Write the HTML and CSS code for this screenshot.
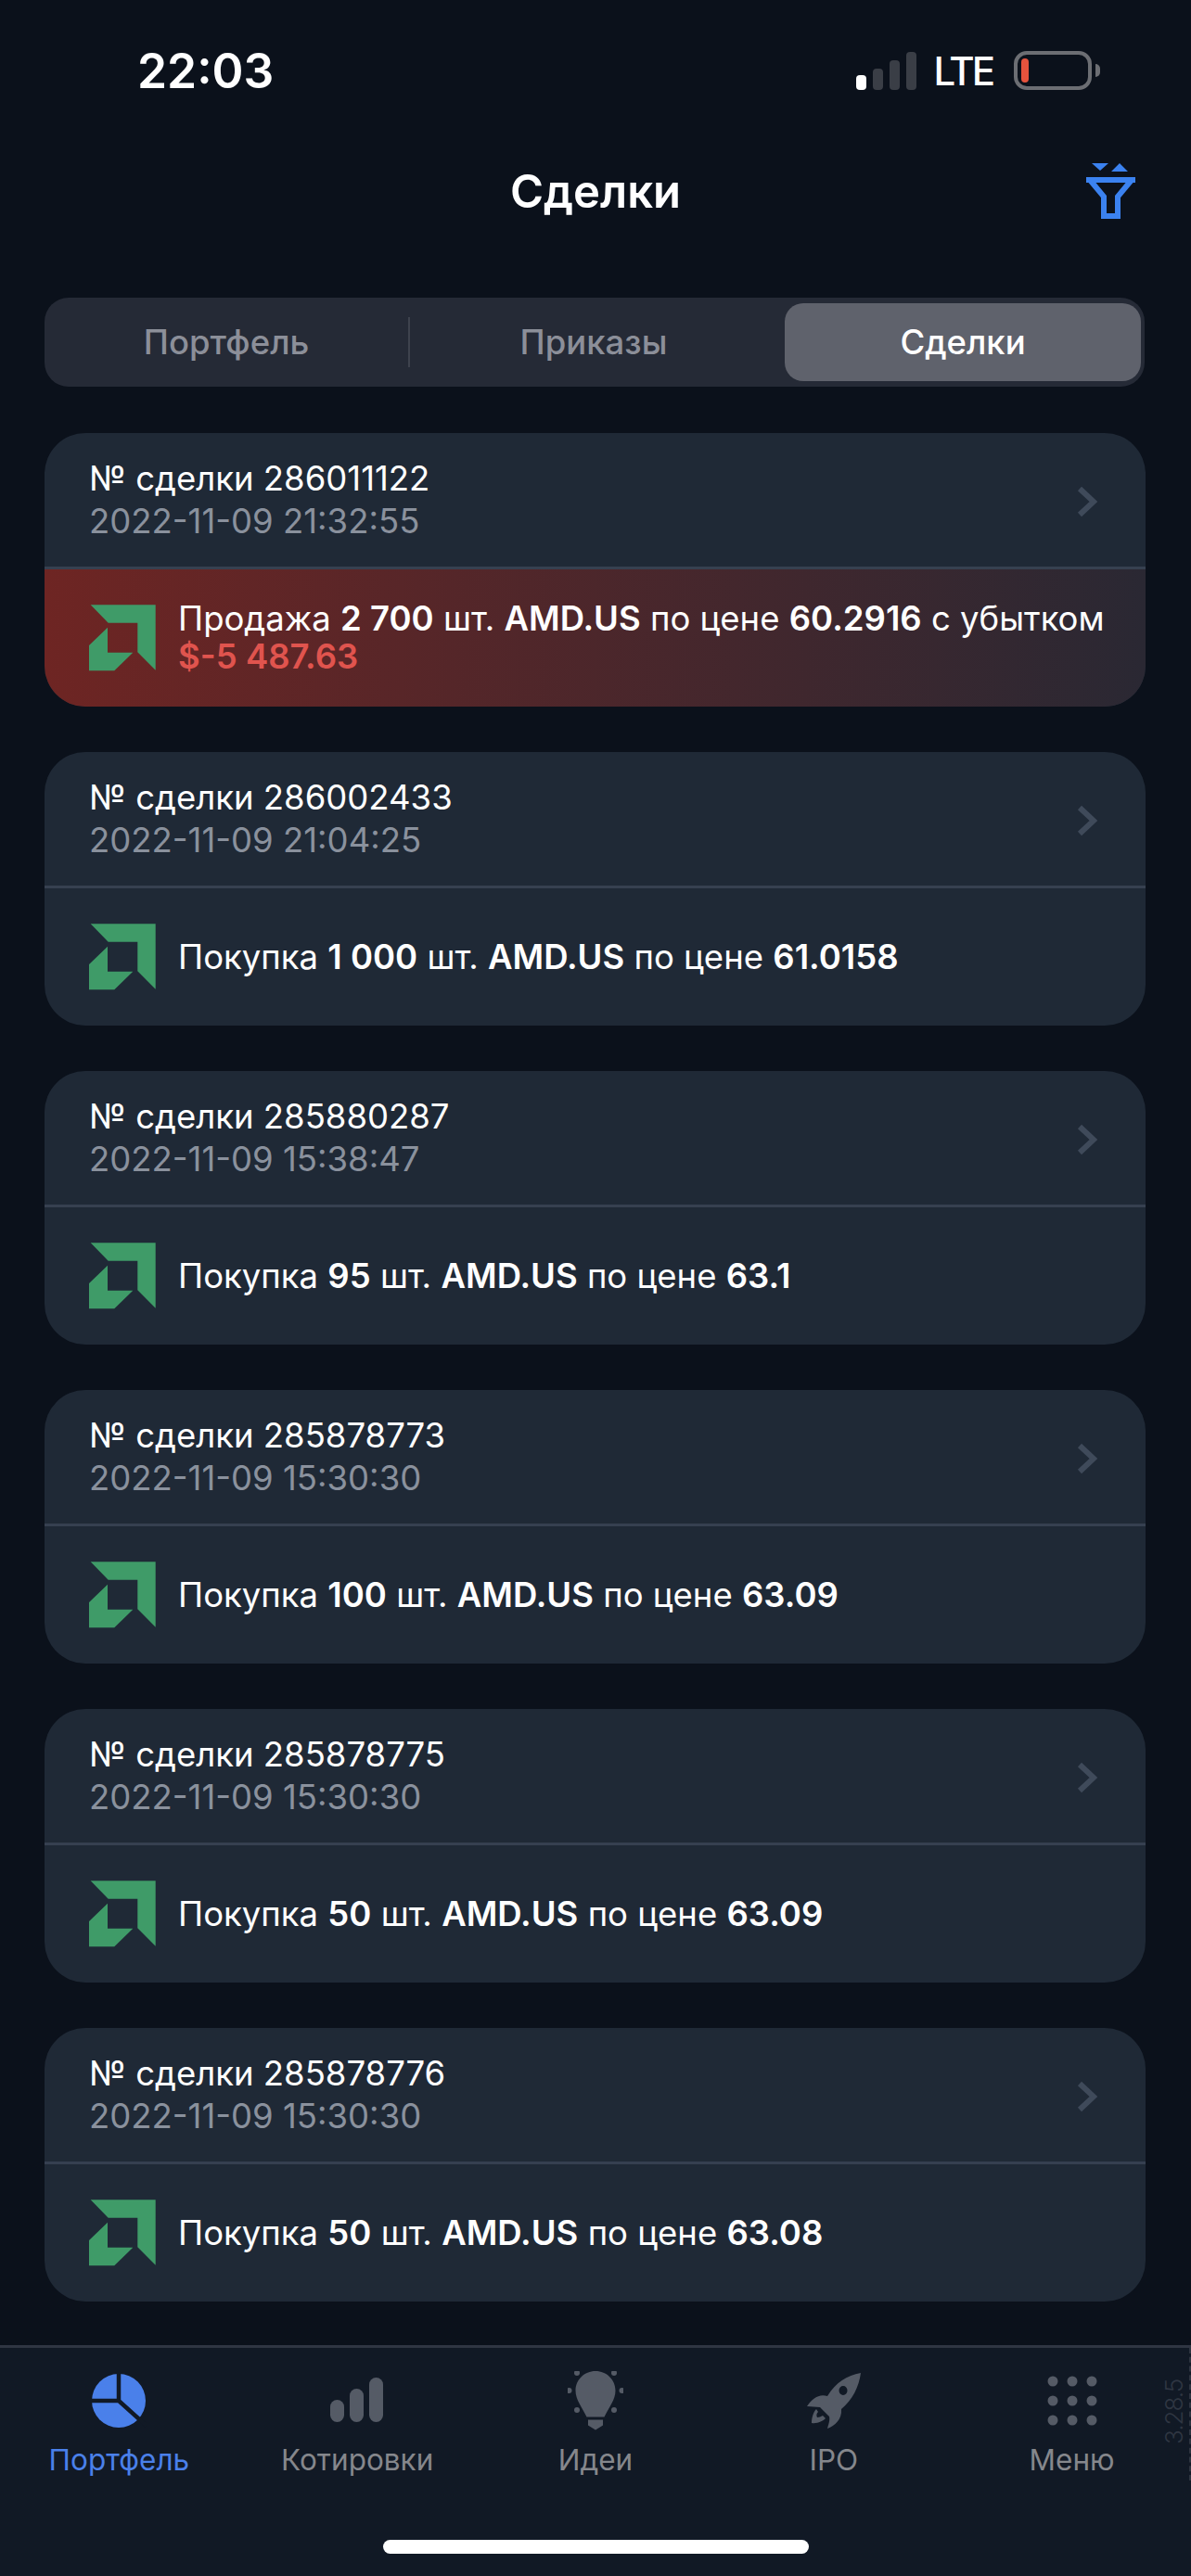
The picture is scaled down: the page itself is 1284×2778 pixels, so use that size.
FILE: index.html
```html
<!DOCTYPE html>
<html lang="ru">

<head>
  <meta charset="UTF-8" />
  <meta name="viewport" content="width=device-width, initial-scale=1.0" />
  <title>Сделки</title>
  <link rel="stylesheet" href="styles.css">
</head>

<body>
  <div class="screen">
    <div class="status-bar">
      <span class="time">22:03</span>
      <div class="status-right">
        <div class="signal">
          <i class="on"></i><i class="b2"></i><i class="b3"></i><i class="b4"></i>
        </div>
        <span class="lte">LTE</span>
        <div class="battery"><i></i></div>
        <div class="battery-nub"></div>
      </div>
    </div>

    <header class="title-bar">
      <h1>Сделки</h1>
      <svg class="filter-icon" width="53" height="60" viewBox="0 0 53 60">
        <path fill="#3b82f0" d="M6 0h18l-9 8zM27 9l9-9 9 9z" />
        <path fill="none" stroke="#3b82f0" stroke-width="6" d="M0 18h53M4 18l15 18v21h15V36l15-18" />
      </svg>
    </header>

    <div class="tabs">
      <div class="tab first">Портфель</div>
      <div class="tab second">Приказы</div>
      <div class="tab active">Сделки</div>
    </div>

    <main class="deals">
      <section class="deal">
        <div class="deal-head">
          <div>
            <p class="deal-no">№ сделки 286011122</p>
            <p class="deal-date">2022-11-09 21:32:55</p>
          </div>
          <svg class="chevron" width="22" height="34" viewBox="0 0 22 34"><path d="M3 3l15 14L3 31" /></svg>
        </div>
        <div class="deal-body loss">
          <svg class="amd" width="72" height="72" viewBox="0 0 72 72"><path d="M1.700.3h70v70.400L52.300 51.300V19.700H20.700z" /><path d="M20 24.700v27h27.300l-20 19.600H0V44z" /></svg>
          <div>
            <p class="deal-text">Продажа <b>2 700</b> шт. <b>AMD.US</b> по цене <b>60.2916</b> с убытком</p>
            <p class="deal-loss">$-5 487.63</p>
          </div>
        </div>
      </section>

      <section class="deal">
        <div class="deal-head">
          <div>
            <p class="deal-no">№ сделки 286002433</p>
            <p class="deal-date">2022-11-09 21:04:25</p>
          </div>
          <svg class="chevron" width="22" height="34" viewBox="0 0 22 34"><path d="M3 3l15 14L3 31" /></svg>
        </div>
        <div class="deal-body">
          <svg class="amd" width="72" height="72" viewBox="0 0 72 72"><path d="M1.700.3h70v70.400L52.300 51.300V19.700H20.700z" /><path d="M20 24.700v27h27.300l-20 19.600H0V44z" /></svg>
          <p class="deal-text">Покупка <b>1 000</b> шт. <b>AMD.US</b> по цене <b>61.0158</b></p>
        </div>
      </section>

      <section class="deal">
        <div class="deal-head">
          <div>
            <p class="deal-no">№ сделки 285880287</p>
            <p class="deal-date">2022-11-09 15:38:47</p>
          </div>
          <svg class="chevron" width="22" height="34" viewBox="0 0 22 34"><path d="M3 3l15 14L3 31" /></svg>
        </div>
        <div class="deal-body">
          <svg class="amd" width="72" height="72" viewBox="0 0 72 72"><path d="M1.700.3h70v70.400L52.300 51.300V19.700H20.700z" /><path d="M20 24.700v27h27.300l-20 19.600H0V44z" /></svg>
          <p class="deal-text">Покупка <b>95</b> шт. <b>AMD.US</b> по цене <b>63.1</b></p>
        </div>
      </section>

      <section class="deal">
        <div class="deal-head">
          <div>
            <p class="deal-no">№ сделки 285878773</p>
            <p class="deal-date">2022-11-09 15:30:30</p>
          </div>
          <svg class="chevron" width="22" height="34" viewBox="0 0 22 34"><path d="M3 3l15 14L3 31" /></svg>
        </div>
        <div class="deal-body">
          <svg class="amd" width="72" height="72" viewBox="0 0 72 72"><path d="M1.700.3h70v70.400L52.300 51.300V19.700H20.700z" /><path d="M20 24.700v27h27.300l-20 19.600H0V44z" /></svg>
          <p class="deal-text">Покупка <b>100</b> шт. <b>AMD.US</b> по цене <b>63.09</b></p>
        </div>
      </section>

      <section class="deal">
        <div class="deal-head">
          <div>
            <p class="deal-no">№ сделки 285878775</p>
            <p class="deal-date">2022-11-09 15:30:30</p>
          </div>
          <svg class="chevron" width="22" height="34" viewBox="0 0 22 34"><path d="M3 3l15 14L3 31" /></svg>
        </div>
        <div class="deal-body">
          <svg class="amd" width="72" height="72" viewBox="0 0 72 72"><path d="M1.700.3h70v70.400L52.300 51.300V19.700H20.700z" /><path d="M20 24.700v27h27.300l-20 19.600H0V44z" /></svg>
          <p class="deal-text">Покупка <b>50</b> шт. <b>AMD.US</b> по цене <b>63.09</b></p>
        </div>
      </section>

      <section class="deal">
        <div class="deal-head">
          <div>
            <p class="deal-no">№ сделки 285878776</p>
            <p class="deal-date">2022-11-09 15:30:30</p>
          </div>
          <svg class="chevron" width="22" height="34" viewBox="0 0 22 34"><path d="M3 3l15 14L3 31" /></svg>
        </div>
        <div class="deal-body">
          <svg class="amd" width="72" height="72" viewBox="0 0 72 72"><path d="M1.700.3h70v70.400L52.300 51.300V19.700H20.700z" /><path d="M20 24.700v27h27.300l-20 19.600H0V44z" /></svg>
          <p class="deal-text">Покупка <b>50</b> шт. <b>AMD.US</b> по цене <b>63.08</b></p>
        </div>
      </section>
    </main>

    <nav class="nav-bar">
      <div class="nav-items">
        <div class="nav-item current">
          <svg width="60" height="60" viewBox="0 0 60 60">
            <circle cx="30" cy="30" r="29" fill="#4a80ea" />
            <path fill="none" stroke="#111925" stroke-width="4.500" d="M30 0v30H0M30 30l30 27" />
          </svg>
          <span>Портфель</span>
        </div>
        <div class="nav-item">
          <svg width="60" height="60" viewBox="0 0 60 60" fill="#555b66">
            <rect x="1" y="29" width="15" height="24" rx="7.500" />
            <rect x="22" y="17" width="15" height="36" rx="7.500" />
            <rect x="43" y="5" width="15" height="48" rx="7.500" />
          </svg>
          <span>Котировки</span>
        </div>
        <div class="nav-item">
          <svg width="60" height="64" viewBox="0 0 60 64" fill="#555b66">
            <path d="M30 0C18 0 8.500 9.500 8.500 21c0 10 7 18 12 28.500h19C44.500 39 51.500 31 51.500 21 51.500 9.500 42 0 30 0z" />
            <path d="M22 52.500h16v6l-8 5-8-5z" />
            <circle cx="10" cy="2" r="3" /><circle cx="50" cy="2" r="3" />
            <circle cx="1.500" cy="21" r="3" /><circle cx="58.500" cy="21" r="3" />
            <circle cx="10" cy="42" r="3" /><circle cx="50" cy="42" r="3" />
          </svg>
          <span>Идеи</span>
        </div>
        <div class="nav-item">
          <svg width="60" height="60" viewBox="0 0 60 60" fill="#555b66">
            <path fill-rule="evenodd" d="M59 0C44 3 32 10 23 25 14 22 6 28 1 36l14 1 10 10c1 4-1 9-2 13 8-3 16-10 15-21C50 29 57 15 59 0zM40 14a4.500 5 0 1 1 0 10 4.500 5 0 0 1 0-10z" />
            <path d="M11 39l2 3c-2 2-2 4-1 6 2 0 4-1 6-2l3 3c-3 3-9 6-15 5 0-6 2-12 5-15z" />
          </svg>
          <span>IPO</span>
        </div>
        <div class="nav-item">
          <svg width="60" height="60" viewBox="0 0 60 60" fill="#555b66">
            <circle cx="9" cy="9" r="5.500" /><circle cx="30" cy="9" r="5.500" /><circle cx="51" cy="9" r="5.500" />
            <circle cx="9" cy="30" r="5.500" /><circle cx="30" cy="30" r="5.500" /><circle cx="51" cy="30" r="5.500" />
            <circle cx="9" cy="51" r="5.500" /><circle cx="30" cy="51" r="5.500" /><circle cx="51" cy="51" r="5.500" />
          </svg>
          <span>Меню</span>
        </div>
      </div>
      <span class="version">3.28.5</span>
      <div class="home-indicator"></div>
    </nav>
  </div>
</body>

</html>
```

FILE: styles.css
```css
* {
  box-sizing: border-box;
}

body {
  margin: 0;
  background-color: #0b111b;
  font-family: Inter, 'Noto Sans', sans-serif;
  color: #fff;
}

p {
  margin: 0;
}

.screen {
  display: flex;
  flex-direction: column;
  width: 1284px;
  height: 2778px;
  overflow: hidden;
}

/* status bar */
.status-bar {
  display: flex;
  justify-content: space-between;
  align-items: center;
  height: 152px;
  padding: 0 98px 0 148px;
}

.time {
  font-size: 51.500px;
  font-weight: 600;
}

.status-right {
  display: flex;
  align-items: center;
}

.signal {
  display: flex;
  align-items: flex-end;
  gap: 7px;
  height: 41px;
  margin-right: 18px;
}

.signal i {
  display: block;
  width: 11px;
  height: 16px;
  border-radius: 4px;
  background-color: #3a3e46;
}

.signal .on {
  background-color: #fff;
}

.signal .b2 {
  height: 23px;
}

.signal .b3 {
  height: 32px;
}

.signal .b4 {
  height: 41px;
}

.lte {
  font-size: 42px;
  font-weight: 500;
  letter-spacing: -3px;
  margin-right: 23px;
}

.battery {
  width: 84px;
  height: 42px;
  padding: 4px;
  border: 4px solid #6c6e73;
  border-radius: 14px;
}

.battery i {
  display: block;
  width: 8px;
  height: 100%;
  border-radius: 4px;
  background-color: #e5533d;
}

.battery-nub {
  width: 5px;
  height: 14px;
  margin-left: 4px;
  border-radius: 0 7px 7px 0;
  background-color: #6c6e73;
}

/* title */
.title-bar {
  position: relative;
  height: 169px;
  text-align: center;
}

h1 {
  margin: 0;
  padding-top: 24px;
  font-size: 49px;
  line-height: 62px;
  font-weight: 600;
}

.filter-icon {
  position: absolute;
  top: 24px;
  left: 1171px;
}

/* tabs */
.tabs {
  display: grid;
  grid-template-columns: 394px 404px 384px;
  align-items: center;
  height: 96px;
  margin: 0 50px 0 48px;
  padding-right: 4px;
  border-radius: 26px;
  background-color: #252a36;
}

.tab {
  height: 84px;
  line-height: 84px;
  text-align: center;
  font-size: 36.500px;
  font-weight: 500;
  color: #8c8f99;
}

.tab.first {
  height: 54px;
  line-height: 54px;
  border-right: 2px solid #3e424d;
}

.tab.second {
  padding-right: 8px;
}

.tab.active {
  border-radius: 20px;
  background-color: #5f626c;
  color: #fff;
}

/* deals list */
.deals {
  flex: 1;
  display: flex;
  flex-direction: column;
  gap: 49px;
  padding: 50px 49px 0 48px;
}

.deal {
  border-radius: 44px;
  overflow: hidden;
  background-color: #1f2936;
}

.deal-head {
  display: flex;
  justify-content: space-between;
  align-items: center;
  height: 147px;
  padding: 0 52px 0 48px;
  border-bottom: 3px solid #364050;
}

.deal-no,
.deal-date {
  font-size: 36.500px;
  line-height: 46px;
}

.deal-text,
.deal-loss {
  font-size: 36.500px;
  line-height: 41px;
}

.deal-date {
  color: #8a919d;
}

.chevron {
  margin-top: 3px;
  fill: none;
  stroke: #3f4a5a;
  stroke-width: 6;
}

.deal-body {
  display: flex;
  align-items: center;
  gap: 24px;
  height: 148px;
  padding-left: 48px;
}

.deal-text b {
  font-weight: 600;
}

.deal-loss {
  font-weight: 600;
  color: #e0544e;
}

.loss {
  background: linear-gradient(90deg, #6e2523, #2a2833);
}

.amd {
  flex: none;
  fill: #3f9b68;
}

/* bottom nav */
.nav-bar {
  position: relative;
  height: 249px;
  border-top: 3px solid #2f3542;
  background-color: #111925;
}

.nav-items {
  display: grid;
  grid-template-columns: repeat(5, 1fr);
  padding-top: 25px;
}

.nav-item {
  display: flex;
  flex-direction: column;
  align-items: center;
  height: 118px;
  font-size: 31.500px;
  color: #85878c;
}

.nav-item svg {
  flex: none;
  height: 64px;
}

.nav-item span {
  margin-top: 13px;
  line-height: 38px;
}

.nav-item.current {
  color: #4a80ea;
}

.version {
  position: absolute;
  top: 0;
  right: 0;
  height: 143px;
  padding: 39px 0 0 5px;
  border-left: 2px dashed #2d3440;
  writing-mode: vertical-rl;
  transform: rotate(180deg);
  font-size: 26px;
  font-weight: 300;
  line-height: 22px;
  letter-spacing: -1px;
  color: #2f3642;
}

.home-indicator {
  width: 459px;
  height: 15px;
  margin: 64px auto 0;
  border-radius: 8px;
  background-color: #fff;
}
```
